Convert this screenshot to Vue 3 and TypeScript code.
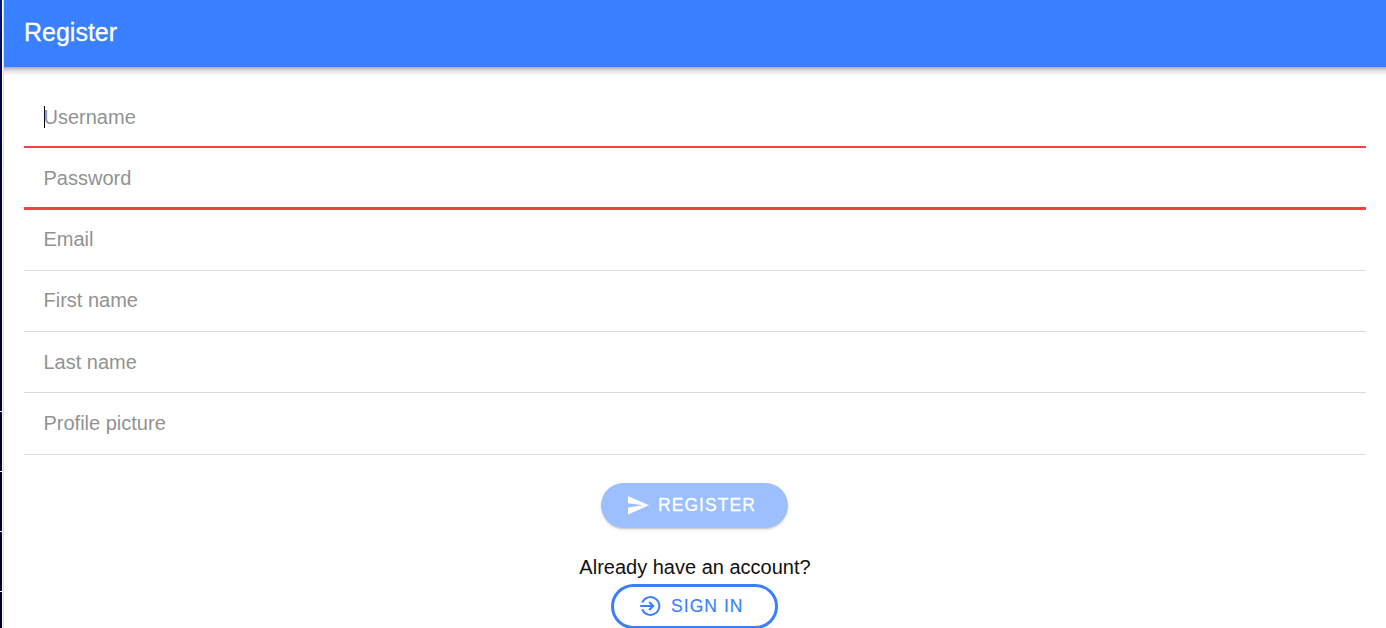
<script setup lang="ts">
interface Field {
  name: string
  label: string
  state?: 'focused' | 'invalid'
}

const fields: Field[] = [
  { name: 'username', label: 'Username', state: 'focused' },
  { name: 'password', label: 'Password', state: 'invalid' },
  { name: 'email', label: 'Email' },
  { name: 'first', label: 'First name' },
  { name: 'last', label: 'Last name' },
  { name: 'picture', label: 'Profile picture' },
]
</script>

<template>
  <div class="window">
    <aside class="edge">
      <i v-for="n in 4" :key="n" class="tick"></i>
    </aside>
    <div class="page">
      <header class="toolbar"><h1>Register</h1></header>
      <main class="content">
        <form class="fields">
          <label v-for="f in fields" :key="f.name" class="item" :class="[f.name, f.state]">
            <span v-if="f.state === 'focused'" class="caret"></span>
            <span class="placeholder">{{ f.label }}</span>
          </label>
        </form>
        <div class="actions">
          <button type="button" class="btn solid">
            <svg class="send" viewBox="0 0 21 19" aria-hidden="true">
              <path d="M0 18.5 21 9.3 0 0v7.2l15 2.1-15 2.1z" fill="currentColor" />
            </svg>
            <span>REGISTER</span>
          </button>
          <p class="question">Already have an account?</p>
          <button type="button" class="btn outline">
            <svg class="enter" viewBox="0 0 21 20" aria-hidden="true">
              <g fill="none" stroke="currentColor" stroke-width="2">
                <path d="M2.2 6.6A8.9 8.9 0 1 1 2.2 13.4" />
                <path d="M0.2 10H13M9.2 6 13.2 10l-4 4" />
              </g>
            </svg>
            <span>SIGN IN</span>
          </button>
        </div>
      </main>
    </div>
  </div>
</template>

<style>
html,
body {
  overflow: hidden;
  background: #fff;
}
</style>

<style scoped>
.window {
  display: flex;
  height: 628px;
  overflow: hidden;
  font-family: "Liberation Sans", Arial, sans-serif;
  color: #000;
}
.edge {
  box-sizing: border-box;
  flex: 0 0 2px;
  padding-top: 411px;
  background: linear-gradient(#001a80 0, #000a4e 60px, #000040 200px, #000038 100%);
}
.tick {
  display: block;
  height: 1px;
  margin-bottom: 59px;
  background: #fff;
}
.page {
  flex: 1;
  min-width: 0;
  margin-left: 1px;
  border-left: 1px solid #dedee3;
}
.toolbar {
  display: flex;
  align-items: center;
  box-sizing: border-box;
  height: 67px;
  padding: 0 20px 4px;
  background: #3880ff;
}
h1 {
  margin: 0;
  font-size: 25px;
  font-weight: 400;
  line-height: 30px;
  color: #fff;
  -webkit-text-stroke: 0.3px #fff;
}
.content {
  padding: 20px 20px 0;
  background: linear-gradient(#adadad 0, #cacaca 2px, #e2e2e2 4px, #f1f1f1 6px, #fafafa 8px, #fff 11px) no-repeat;
  background-size: 100% 11px;
}
.item {
  display: flex;
  align-items: flex-start;
  box-sizing: border-box;
  height: 61px;
  padding: 18px 20px 0;
  border-bottom: 1px solid #dbdbdb;
}
.placeholder {
  margin-left: -0.5px;
  font-size: 20px;
  line-height: 24px;
  color: #929292;
}
.focused {
  border-bottom: 2px solid #ef4343;
}
.invalid {
  height: 62px;
  border-bottom: 3px solid #ef4343;
}
.email,
.first {
  padding-top: 17px;
}
.picture {
  height: 62px;
}
.caret {
  width: 1px;
  height: 22px;
  margin: 1px -1px 0 0;
  background: #000;
}
.actions {
  display: flex;
  flex-direction: column;
  align-items: center;
  padding-top: 28px;
}
.btn {
  display: flex;
  align-items: center;
  box-sizing: border-box;
  margin: 0 1px 0 0;
  border: 0;
  border-radius: 23px;
  font: 400 17.5px/20px "Liberation Sans", Arial, sans-serif;
  letter-spacing: 1.05px;
  white-space: nowrap;
}
.solid {
  width: 187px;
  height: 45px;
  padding: 0 0 1px 27px;
  gap: 9px;
  color: #fff;
  background: #9bbfff;
  box-shadow: 0 3px 1px -2px rgba(0, 0, 0, 0.1), 0 2px 2px rgba(0, 0, 0, 0.07),
    0 1px 5px rgba(0, 0, 0, 0.06);
}
.solid span {
  -webkit-text-stroke: 0.3px currentColor;
}
.question {
  margin: 27px 0 5px;
  font-size: 20px;
  line-height: 24px;
  color: #111;
}
.outline {
  width: 167px;
  height: 45px;
  padding: 0 0 2px 26px;
  gap: 10px;
  border: 3px solid #3880ff;
  color: #3880ff;
  background: transparent;
}
.outline span {
  -webkit-text-stroke: 0.15px currentColor;
}
.send {
  width: 21px;
  height: 19px;
}
.enter {
  width: 21px;
  height: 20px;
}
</style>
